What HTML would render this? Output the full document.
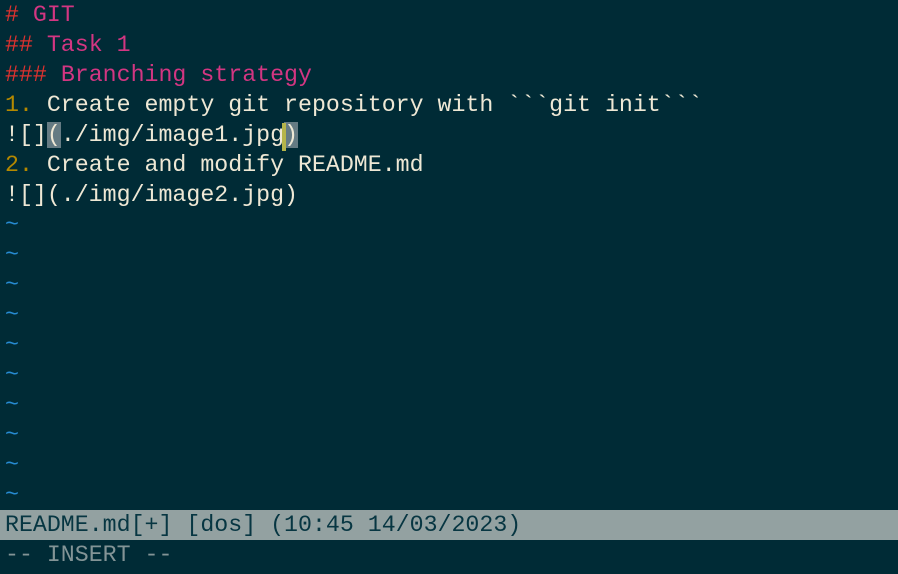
<!DOCTYPE html>
<html><head><style>
html,body{margin:0;padding:0;background:#002b36;width:898px;height:574px;overflow:hidden}
.w{margin:0;font-family:"Liberation Mono",monospace;font-size:23.25px;line-height:30px;color:#eee8d5;white-space:pre}
.r{color:#dc322f}.m{color:#d33682}.y{color:#b58900}.t{color:#268bd2}
.ln{padding-left:5px;height:30px}
.st{background:#93a1a1;color:#073642}
.p{background:#657b83;color:#eee8d5}
.cur{position:relative}
.cur::before{content:"";position:absolute;left:-2px;top:1px;width:4px;height:28px;background:#b5b54a}
.ins{color:#839496}
</style></head><body><div class="w"><div class="ln"><span class="r">#</span> <span class="m">GIT</span></div><div class="ln"><span class="r">##</span> <span class="m">Task 1</span></div><div class="ln"><span class="r">###</span> <span class="m">Branching strategy</span></div><div class="ln"><span class="y">1.</span> Create empty git repository with &#96;&#96;&#96;git init&#96;&#96;&#96;</div><div class="ln">![]<span class="p">(</span>./img/image1.jpg<span class="p cur">)</span></div><div class="ln"><span class="y">2.</span> Create and modify README.md</div><div class="ln">![](./img/image2.jpg)</div><div class="ln t">~</div><div class="ln t">~</div><div class="ln t">~</div><div class="ln t">~</div><div class="ln t">~</div><div class="ln t">~</div><div class="ln t">~</div><div class="ln t">~</div><div class="ln t">~</div><div class="ln t">~</div><div class="ln st">README.md[+] [dos] (10:45 14/03/2023)</div><div class="ln ins">-- INSERT --</div></div></body></html>
